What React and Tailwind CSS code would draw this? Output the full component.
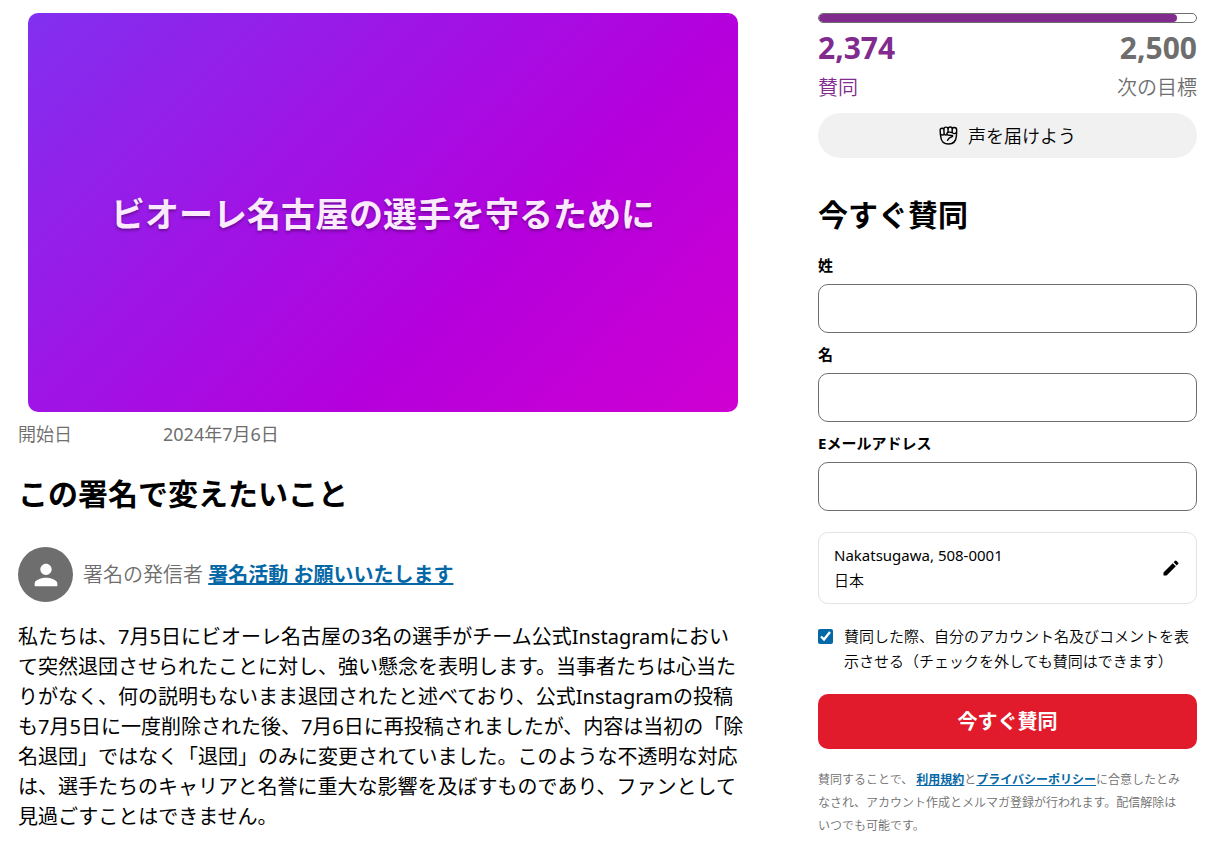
import { useState } from 'react'
import { MdEdit, MdPerson } from 'react-icons/md'

const FIELDS = [
  { id: 'last-name', label: '姓', type: 'text' },
  { id: 'first-name', label: '名', type: 'text' },
  { id: 'email', label: 'Eメールアドレス', type: 'email' },
]

function IconFist(props) {
  return (
    <svg viewBox="0 0 20 20" fill="none" stroke="currentColor" strokeWidth="1.5" strokeLinecap="round" strokeLinejoin="round" {...props}>
      {/* outline */}
      <path d="M1.200 4.600C1.200 2.900 2.200 2.400 3.200 2.400c.9 0 1.500.3 1.900.8.100-1.400.9-2 2.200-2 1.300 0 2 .5 2.300 1.500.200-1.100 1-1.600 2.200-1.600 1.300 0 2 .6 2.200 1.600.400-.8 1.100-1.100 2.100-1.100 1.500 0 2.500.8 2.500 2.500 0 2.200-.1 4.200-.3 6.600-.4 5-3.300 8.300-8.100 8.300-4.800 0-7.900-2.900-8.300-7.400C1.500 9 1.200 7 1.200 4.600Z" />
      {/* fingers */}
      <path d="M5.100 3.200 5.400 8.600M9.600 2.700 9.500 6.600M14 2.700 13.800 6.800" />
      <path d="M1.600 8.600c1 1.200 3 1.200 3.800 0 .8 1 2.300 1.100 3.200.3" />
      {/* thumb */}
      <path d="M18 7.200c-1.200 1-3.200.8-4.200-.4-1.400-.4-3-.5-4.300-.2-1.300.4-1.600 2-.3 2.700 1.200.6 2.700.5 4.400.6.800.1 1 .9.300 1.200-2.200.7-4 1.900-4.900 3.900" />
    </svg>
  )
}

// Signature count against the next goal.
function Progress({ count, goal }) {
  return (
    <div>
      <div className="h-[10px] overflow-hidden rounded-full border border-[#6e6e6e]">
        <div className="h-full rounded-full bg-[#822b8f]" style={{ width: `${(count / goal) * 100}%` }} />
      </div>
      <div className="mt-[3px] flex justify-between">
        <div className="text-[#822b8f]">
          <p className="text-[30px] leading-[44px] font-bold">{count.toLocaleString('en-US')}</p>
          <p className="mt-[2px] text-xl leading-8">賛同</p>
        </div>
        <div className="text-right text-[#6e6e6e]">
          <p className="text-[30px] leading-[44px] font-bold">{goal.toLocaleString('en-US')}</p>
          <p className="mt-[2px] text-xl leading-8">次の目標</p>
        </div>
      </div>
    </div>
  )
}

function SignForm() {
  const [visible, setVisible] = useState(true)

  return (
    <form onSubmit={(e) => e.preventDefault()}>
      <h2 className="mt-[35px] text-[30px] leading-[44px] font-bold">今すぐ賛同</h2>

      <div className="mt-[17px] flex flex-col gap-[10px]">
        {FIELDS.map((f) => (
          <div key={f.id}>
            <label htmlFor={f.id} className="block text-[15px] leading-[22px] font-bold">
              {f.label}
            </label>
            <input
              id={f.id}
              type={f.type}
              className="mt-2 block h-[49px] w-full rounded-[10px] border border-[#6e6e6e] px-4 text-xl"
            />
          </div>
        ))}
      </div>

      <div className="mt-[21px] flex items-center justify-between rounded-[10px] border border-[#e3e3e3] px-[15px] py-[10px]">
        <div className="text-[15px] leading-[25px]">
          <p className="font-normal">Nakatsugawa, 508-0001</p>
          <p>日本</p>
        </div>
        <button type="button" aria-label="編集">
          <MdEdit size={20} />
        </button>
      </div>

      <label className="mt-5 flex items-start gap-[11px] text-[15px] leading-[25px]">
        <input
          type="checkbox"
          checked={visible}
          onChange={(e) => setVisible(e.target.checked)}
          className="mt-[5px] size-[15px] shrink-0 accent-[#0568a6]"
        />
        <span>賛同した際、自分のアカウント名及びコメントを表示させる（チェックを外しても賛同はできます）</span>
      </label>

      <button type="submit" className="mt-5 h-[55px] w-full rounded-[10px] bg-[#e11b2b] text-xl font-bold text-white">
        今すぐ賛同
      </button>

      <p className="mt-[19px] text-xs leading-[23px] text-[#6e6e6e]">
        賛同することで、 <a href="#terms" className="font-bold text-[#0568a6] underline">利用規約</a>と
        <a href="#privacy" className="font-bold text-[#0568a6] underline">プライバシーポリシー</a>に合意したとみ
        <br />
        なされ、アカウント作成とメルマガ登録が行われます。配信解除は
        <br />
        いつでも可能です。
      </p>
    </form>
  )
}

export default function App() {
  return (
    <div
      lang="ja"
      className="grid grid-cols-[minmax(0,1fr)_379px] gap-[70px] bg-white pt-[13px] pr-[14px] pb-4 pl-[18px] font-['Noto_Sans','Noto_Sans_CJK_JP',sans-serif] font-[350] text-black"
    >
      <main>
        <div className="mx-[10px] flex aspect-video items-center justify-center rounded-[10px] bg-[linear-gradient(135deg,#8230f0_0%,#b400dc_64%,#cf00d2_100%)] pt-1">
          <p className="text-[34px] font-bold text-[#fbeafd] [text-shadow:0_2px_3px_rgba(60,0,80,0.5)]">
            ビオーレ名古屋の選手を守るために
          </p>
        </div>

        <dl className="mt-[9px] flex text-lg leading-[26px] text-[#6e6e6e]">
          <dt className="w-[145px]">開始日</dt>
          <dd className="font-normal">2024年7月6日</dd>
        </dl>

        <h2 className="mt-[25px] text-[30px] leading-[44px] font-bold">この署名で変えたいこと</h2>

        <div className="mt-[31px] flex items-center gap-[10px] text-xl">
          <span className="flex size-[55px] items-center justify-center rounded-full bg-[#6e6e6e] text-white">
            <MdPerson size={34} />
          </span>
          <p className="text-[#6e6e6e]">
            署名の発信者{' '}
            <a href="#starter" className="font-bold text-[#0568a6] underline">署名活動 お願いいたします</a>
          </p>
        </div>

        <p className="mt-5 pr-1 text-xl leading-[30px] font-normal">
          私たちは、7月5日にビオーレ名古屋の3名の選手がチーム公式Instagramにおいて突然退団させられたことに対し、強い懸念を表明します。当事者たちは心当たりがなく、何の説明もないまま退団されたと述べており、公式Instagramの投稿も7月5日に一度削除された後、7月6日に再投稿されましたが、内容は当初の「除名退団」ではなく「退団」のみに変更されていました。このような不透明な対応は、選手たちのキャリアと名誉に重大な影響を及ぼすものであり、ファンとして見過ごすことはできません。
        </p>
      </main>

      <aside>
        <Progress count={2374} goal={2500} />
        <button type="button" className="mt-[9px] flex h-[45px] w-full items-center justify-center gap-[10px] rounded-full bg-[#f1f1f1] text-lg">
          <IconFist width={19} height={19} />
          声を届けよう
        </button>
        <SignForm />
      </aside>
    </div>
  )
}
